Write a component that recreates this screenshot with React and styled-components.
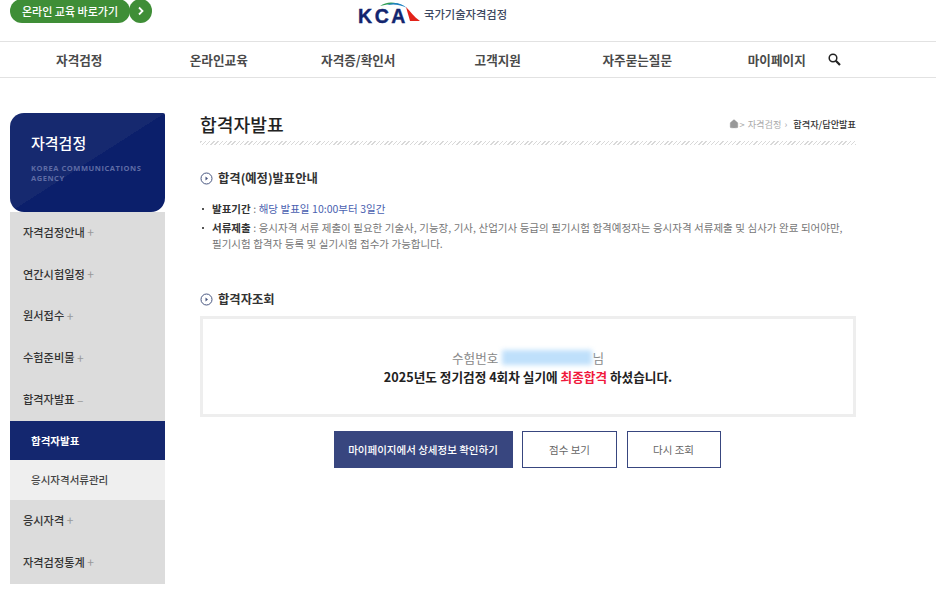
import React from 'react';
import styled, { createGlobalStyle } from 'styled-components';
import { Home } from 'lucide-react';

const GlobalStyle = createGlobalStyle`
    html, body {
        margin: 0;
        padding: 0;
        background: #fff;
        font-family: "Noto Sans CJK KR", "Noto Sans", sans-serif;
        color: #333;
        overflow: hidden;
    }
    * { box-sizing: border-box; }
`;

const Page = styled.div`
    width: 936px;
    height: 604px;
    overflow: hidden;
`;

const TopBar = styled.header`
    height: 42px;
    border-bottom: 1px solid #e2e2e2;
    padding-left: 10px;
    display: grid;
    grid-template-columns: 330px 1fr;
    overflow: hidden;
`;

const EduLink = styled.a`
    display: flex;
    align-items: flex-start;
    margin-top: -1px;
`;

const EduLabel = styled.span`
    width: 120px;
    height: 24px;
    border-radius: 12px;
    background: #3f8e37;
    color: #fff;
    font-size: 11px;
    font-weight: 500;
    line-height: 24px;
    text-align: center;
`;

const EduArrow = styled.span`
    width: 23px;
    height: 24px;
    border-radius: 50%;
    background: #3f8e37;
    display: flex;
    align-items: center;
    justify-content: center;
    margin-left: -1px;
`;

const Logo = styled.div`
    display: flex;
    align-items: flex-start;
    margin-left: 18px;
    padding-top: 4px;
`;

const LogoMark = styled.div`
    position: relative;
    width: 66px;
    height: 18px;
`;

const LogoText = styled.span`
    font-family: "Liberation Sans", sans-serif;
    font-size: 19.5px;
    font-weight: 700;
    line-height: 20px;
    letter-spacing: 2.6px;
    color: #12256f;
    -webkit-text-stroke: 0.4px #12256f;
`;

const LogoArt = styled.svg`
    position: absolute;
    left: 0;
    top: -4px;
`;

const LogoName = styled.span`
    font-size: 11.3px;
    font-weight: 500;
    color: #3b4760;
    line-height: 14px;
    margin-top: 3px;
`;

const NavBar = styled.nav`
    height: 36px;
    border-bottom: 1px solid #e2e2e2;
    padding-left: 9.5px;
    display: grid;
    grid-template-columns: repeat(6, 139.5px) auto;
    align-items: center;
`;

const NavItem = styled.a`
    text-align: center;
    font-size: 12.6px;
    font-weight: 700;
    color: #4a4a4a;
    line-height: 35px;
`;

const SearchBtn = styled.span`
    display: flex;
    margin-left: -18.5px;
`;

const Body = styled.div`
    display: grid;
    grid-template-columns: 155px 656px;
    gap: 35px;
    padding: 35px 0 0 10px;
`;

const Side = styled.aside`
    display: flex;
    flex-direction: column;
`;

const SideHead = styled.div`
    height: 99px;
    padding: 19px 10px 0 21px;
    border-radius: 14px 2px 14px 14px;
    background: linear-gradient(to bottom right, #16296f 50%, #0b1f6b 50%);
`;

const SideTitle = styled.div`
    font-size: 15px;
    font-weight: 500;
    line-height: 22px;
    color: #fff;
`;

const SideSub = styled.div`
    margin-top: 9px;
    font-family: "Open Sans", sans-serif;
    font-size: 7.5px;
    font-weight: 700;
    line-height: 10px;
    letter-spacing: 0.55px;
    color: #5f6ca5;
`;

const Menu = styled.ul`
    list-style: none;
    margin: 0;
    padding: 0;
    background: #dcdcdc;
`;

const MenuItem = styled.li`
    height: 41.8px;
    padding: 0 0 2px 13px;
    display: flex;
    align-items: center;
    font-size: 11.2px;
    font-weight: 500;
    color: #333;
`;

const Mark = styled.span`
    margin-left: 2.5px;
    font-size: 12px;
    font-weight: 400;
    color: #999;
`;

const SubItem = styled.li`
    height: ${(p) => (p.$active ? '39px' : '40px')};
    padding-left: 21px;
    display: flex;
    align-items: center;
    font-size: 10.5px;
    font-weight: ${(p) => (p.$active ? 700 : 500)};
    color: ${(p) => (p.$active ? '#fff' : '#444')};
    background: ${(p) => (p.$active ? '#14276f' : '#efefef')};
`;

const Main = styled.main`
    display: flex;
    flex-direction: column;
`;

const TitleRow = styled.div`
    display: flex;
    align-items: center;
    justify-content: space-between;
    height: 28px;
    padding-bottom: 7px;
`;

const Title = styled.h1`
    margin: 0;
    font-size: 18.2px;
    font-weight: 500;
    line-height: 24px;
    color: #222;
`;

const Crumbs = styled.div`
    display: flex;
    align-items: center;
    gap: 3px;
    font-size: 9.2px;
    color: #aaa;
`;

const HomeIcon = styled(Home)`
    margin-right: -2px;
`;

const CrumbNow = styled.span`
    margin-left: 3px;
    color: #333;
    font-weight: 500;
`;

const Hatch = styled.div`
    height: 4px;
    background: repeating-linear-gradient(-45deg, #d9d9d9 0 1px, #fff 1px 3px);
`;

const SectionHead = styled.h2`
    display: flex;
    align-items: center;
    gap: 5px;
    margin: ${(p) => p.$top}px 0 0;
    font-size: 12.3px;
    font-weight: 700;
    line-height: 18px;
    color: #333;
`;

const Notes = styled.ul`
    list-style: none;
    margin: 14px 0 0;
    padding: 0;
    font-size: 10.5px;
    line-height: 16px;
    word-spacing: 0.2px;
    color: #777;
`;

const Note = styled.li`
    position: relative;
    padding: 0 10px 0 12px;
    margin-bottom: 3px;
    &::before {
        content: '';
        position: absolute;
        left: 2px;
        top: 7px;
        width: 2px;
        height: 2px;
        background: #555;
    }
`;

const NoteLabel = styled.b`
    color: #333;
    font-weight: 700;
`;

const NoteBlue = styled.span`
    color: #4a5fb0;
`;

const ResultBox = styled.div`
    height: 101px;
    margin-top: 8px;
    border: 3px solid #eeeeee;
    display: flex;
    flex-direction: column;
    align-items: center;
    padding-top: 29px;
`;

const ResultName = styled.div`
    display: flex;
    align-items: center;
    height: 19px;
    font-size: 12.6px;
    color: #888;
`;

const Blurred = styled.span`
    width: 90px;
    height: 15px;
    margin: 0 0 0 4px;
    background: #bfe0fb;
    filter: blur(2.5px);
`;

const ResultText = styled.div`
    font-size: 12.65px;
    font-weight: 700;
    line-height: 19px;
    color: #222;
`;

const Red = styled.span`
    color: #f0193c;
`;

const Buttons = styled.div`
    display: flex;
    justify-content: center;
    gap: 9.5px;
    margin-top: 14px;
    padding-right: 2px;
`;

const Btn = styled.a`
    height: 37px;
    width: ${(p) => p.$w}px;
    display: flex;
    align-items: center;
    justify-content: center;
    font-size: 10.5px;
    font-weight: ${(p) => (p.$primary ? 500 : 400)};
    color: ${(p) => (p.$primary ? '#fff' : '#666')};
    background: ${(p) => (p.$primary ? '#38467f' : '#fff')};
    border: 1px solid #38467f;
`;

const Bullet = () => (
    <svg width="13" height="13" viewBox="0 0 13 13">
        <circle cx="6.5" cy="6.5" r="5.5" fill="none" stroke="#47557f" strokeWidth="1" />
        <path d="M5.5 4.6 L8 6.5 L5.5 8.4 Z" fill="#47557f" />
    </svg>
);

const menuTop = ['자격검정안내', '연간시험일정', '원서접수', '수험준비물'];
const navItems = ['자격검정', '온라인교육', '자격증/확인서', '고객지원', '자주묻는질문', '마이페이지'];

export default function App() {
    return (
        <Page>
            <GlobalStyle />
            <TopBar>
                <EduLink>
                    <EduLabel>온라인 교육 바로가기</EduLabel>
                    <EduArrow>
                        <svg width="8" height="10" viewBox="0 0 8 10">
                            <path d="M2 1.5 L5.5 5 L2 8.5" fill="none" stroke="#fff" strokeWidth="1.8" />
                        </svg>
                    </EduArrow>
                </EduLink>
                <Logo>
                    <LogoMark>
                        <LogoText>KCA</LogoText>
                        <LogoArt width="66" height="26" viewBox="0 0 66 26">
                            <path d="M22 6 Q32 -1 46 6 Q37 2 22 6 Z" fill="#2f9e54" />
                            <path d="M29 5 Q39 0 49 8 Q40 3 29 5 Z" fill="#1d7fc4" />
                            <path d="M48 7 C52 11 56 17 62 21 L52 21 C51 17 49 11 48 7 Z" fill="#e2231a" />
                        </LogoArt>
                    </LogoMark>
                    <LogoName>국가기술자격검정</LogoName>
                </Logo>
            </TopBar>
            <NavBar>
                {navItems.map((n) => (
                    <NavItem key={n}>{n}</NavItem>
                ))}
                <SearchBtn>
                    <svg width="13" height="13" viewBox="0 0 13 13">
                        <circle cx="5" cy="5" r="3.8" fill="none" stroke="#222" strokeWidth="1.5" />
                        <path d="M7.8 7.8 L12 12" stroke="#222" strokeWidth="2.2" />
                    </svg>
                </SearchBtn>
            </NavBar>
            <Body>
                <Side>
                    <SideHead>
                        <SideTitle>자격검정</SideTitle>
                        <SideSub>KOREA COMMUNICATIONS AGENCY</SideSub>
                    </SideHead>
                    <Menu>
                        {menuTop.map((m) => (
                            <MenuItem key={m}>
                                {m}
                                <Mark>+</Mark>
                            </MenuItem>
                        ))}
                        <MenuItem>
                            합격자발표
                            <Mark>–</Mark>
                        </MenuItem>
                        <SubItem $active>합격자발표</SubItem>
                        <SubItem>응시자격서류관리</SubItem>
                        <MenuItem>
                            응시자격
                            <Mark>+</Mark>
                        </MenuItem>
                        <MenuItem>
                            자격검정통계
                            <Mark>+</Mark>
                        </MenuItem>
                    </Menu>
                </Side>
                <Main>
                    <TitleRow>
                        <Title>합격자발표</Title>
                        <Crumbs>
                            <HomeIcon size={10} fill="#999" stroke="#999" strokeWidth={1} />
                            <span>&gt;</span>
                            <span>자격검정</span>
                            <span>›</span>
                            <CrumbNow>합격자/답안발표</CrumbNow>
                        </Crumbs>
                    </TitleRow>
                    <Hatch />
                    <SectionHead $top={24}>
                        <Bullet />
                        합격(예정)발표안내
                    </SectionHead>
                    <Notes>
                        <Note>
                            <NoteLabel>발표기간</NoteLabel> : <NoteBlue>해당 발표일 10:00부터 3일간</NoteBlue>
                        </Note>
                        <Note>
                            <NoteLabel>서류제출</NoteLabel> : 응시자격 서류 제출이 필요한 기술사, 기능장, 기사, 산업기사 등급의 필기시험 합격예정자는 응시자격 서류제출 및 심사가 완료 되어야만, 필기시험 합격자 등록 및 실기시험 접수가 가능합니다.
                        </Note>
                    </Notes>
                    <SectionHead $top={35}>
                        <Bullet />
                        합격자조회
                    </SectionHead>
                    <ResultBox>
                        <ResultName>
                            수험번호
                            <Blurred />
                            님
                        </ResultName>
                        <ResultText>
                            2025년도 정기검정 4회차 실기에 <Red>최종합격</Red> 하셨습니다.
                        </ResultText>
                    </ResultBox>
                    <Buttons>
                        <Btn $primary $w={179}>마이페이지에서 상세정보 확인하기</Btn>
                        <Btn $w={95}>점수 보기</Btn>
                        <Btn $w={94}>다시 조회</Btn>
                    </Buttons>
                </Main>
            </Body>
        </Page>
    );
}
